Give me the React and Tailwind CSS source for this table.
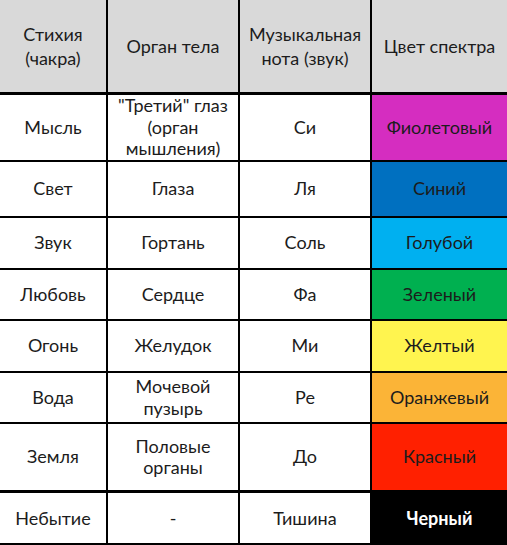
const rows = [
  { a: "Мысль", b: ["\"Третий\" глаз", "(орган", "мышления)"], c: "Си", d: "Фиолетовый", bg: "bg-[#d52dc0]", h: "h-[67px]" },
  { a: "Свет", b: ["Глаза"], c: "Ля", d: "Синий", bg: "bg-[#0070c0]", h: "h-[56px]" },
  { a: "Звук", b: ["Гортань"], c: "Соль", d: "Голубой", bg: "bg-[#00b0f0]", h: "h-[52px]" },
  { a: "Любовь", b: ["Сердце"], c: "Фа", d: "Зеленый", bg: "bg-[#00b050]", h: "h-[51px]" },
  { a: "Огонь", b: ["Желудок"], c: "Ми", d: "Желтый", bg: "bg-[#fff44f]", h: "h-[52px]" },
  { a: "Вода", b: ["Мочевой", "пузырь"], c: "Ре", d: "Оранжевый", bg: "bg-[#fbb437]", h: "h-[51px]" },
  { a: "Земля", b: ["Половые", "органы"], c: "До", d: "Красный", bg: "bg-[#ff2000]", h: "h-[69px]", thick: true },
];

function Cell({ children, className = "" }) {
  return (
    <div className={`flex flex-col items-center justify-center text-center ${className}`}>
      {children}
    </div>
  );
}

export default function App() {
  return (
    <div
      className="w-[507px] h-[545px] bg-white text-[#1c1c1c] text-[18px] overflow-hidden"
      style={{ fontFamily: "Lato, 'Noto Sans', sans-serif" }}
    >
      {/* header */}
      <div className="grid grid-cols-[106px_132px_132px_137px] h-[95px] bg-[#d9d9d9] border-b-[3px] border-black leading-[24px]">
        <Cell>
          <span>Стихия</span>
          <span>(чакра)</span>
        </Cell>
        <Cell className="border-l-2 border-black">Орган тела</Cell>
        <Cell className="border-l-2 border-black">
          <span>Музыкальная</span>
          <span>нота (звук)</span>
        </Cell>
        <Cell className="border-l-2 border-black">Цвет спектра</Cell>
      </div>

      {rows.map((r) => (
        <div
          key={r.a}
          className={`grid grid-cols-[106px_132px_132px_137px] ${r.h} border-black leading-[21.5px] ${r.thick ? "border-b-[3px]" : "border-b-2"}`}
        >
          <Cell>{r.a}</Cell>
          <Cell className="border-l-2 border-black">
            {r.b.map((t) => (
              <span key={t}>{t}</span>
            ))}
          </Cell>
          <Cell className="border-l-2 border-black">{r.c}</Cell>
          <Cell className={`border-l-2 border-black ${r.bg}`}>{r.d}</Cell>
        </div>
      ))}

      <div className="grid grid-cols-[106px_132px_132px_137px] h-[52px] border-b-2 border-black">
        <Cell>Небытие</Cell>
        <Cell className="border-l-2 border-black">-</Cell>
        <Cell className="border-l-2 border-black">Тишина</Cell>
        <Cell className="border-l-2 border-black bg-black text-white font-bold">Черный</Cell>
      </div>
    </div>
  );
}
